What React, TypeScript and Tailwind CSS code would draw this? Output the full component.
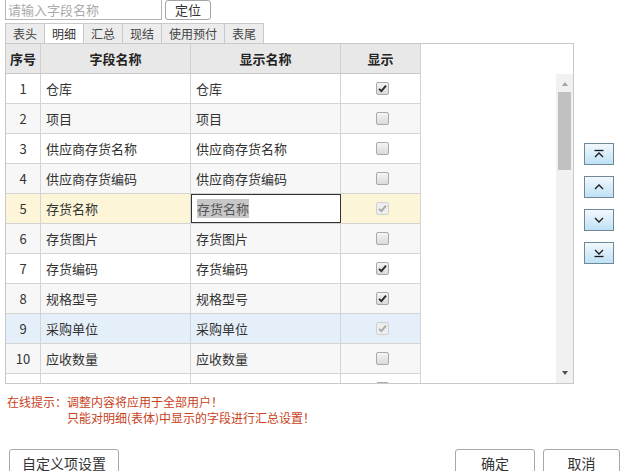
import React from "react";

type Row = { no: number; field: string; show: string; checked: boolean; disabled?: boolean; tone?: "yellow" | "blue" };

const rows: Row[] = [
  { no: 1, field: "仓库", show: "仓库", checked: true },
  { no: 2, field: "项目", show: "项目", checked: false },
  { no: 3, field: "供应商存货名称", show: "供应商存货名称", checked: false },
  { no: 4, field: "供应商存货编码", show: "供应商存货编码", checked: false },
  { no: 5, field: "存货名称", show: "存货名称", checked: true, disabled: true, tone: "yellow" },
  { no: 6, field: "存货图片", show: "存货图片", checked: false },
  { no: 7, field: "存货编码", show: "存货编码", checked: true },
  { no: 8, field: "规格型号", show: "规格型号", checked: true },
  { no: 9, field: "采购单位", show: "采购单位", checked: true, disabled: true, tone: "blue" },
  { no: 10, field: "应收数量", show: "应收数量", checked: false },
  { no: 11, field: "数量", show: "数量", checked: false },
];

const tabs = ["表头", "明细", "汇总", "现结", "使用预付", "表尾"];

function Check({ checked, disabled }: { checked: boolean; disabled?: boolean }) {
  return (
    <span
      className={`flex h-[13px] w-[13px] items-center justify-center rounded-[2px] border ${
        disabled ? "border-[#d0d0d0] bg-[#eeeeee]" : "border-[#a9a9a9] bg-gradient-to-b from-[#f4f4f4] to-[#dadada]"
      }`}
    >
      {checked && (
        <svg width="9" height="9" viewBox="0 0 9 9">
          <path
            d="M1 4.8 L3.4 7.2 L8 1.6"
            fill="none"
            stroke={disabled ? "#a8a8a8" : "#2b2b2b"}
            strokeWidth="1.9"
          />
        </svg>
      )}
    </span>
  );
}

function MoveButton({ kind }: { kind: "top" | "up" | "down" | "bottom" }) {
  return (
    <button className="flex h-[22px] w-[30px] items-center justify-center border border-[#6f8796] bg-gradient-to-b from-[#f2f8fc] to-[#bfe1f6]">
      <svg width="12" height="10" viewBox="0 0 12 10">
        {kind === "top" && (
          <>
            <path d="M1.5 1.5 H10.5" stroke="#1a1a1a" strokeWidth="1.3" />
            <path d="M2 8 L6 4 L10 8" fill="none" stroke="#1a1a1a" strokeWidth="1.3" />
          </>
        )}
        {kind === "up" && <path d="M2 7 L6 3 L10 7" fill="none" stroke="#1a1a1a" strokeWidth="1.3" />}
        {kind === "down" && <path d="M2 3 L6 7 L10 3" fill="none" stroke="#1a1a1a" strokeWidth="1.3" />}
        {kind === "bottom" && (
          <>
            <path d="M2 2 L6 6 L10 2" fill="none" stroke="#1a1a1a" strokeWidth="1.3" />
            <path d="M1.5 8.5 H10.5" stroke="#1a1a1a" strokeWidth="1.3" />
          </>
        )}
      </svg>
    </button>
  );
}

export default function App() {
  return (
    <div
      className="relative h-[471px] w-[625px] overflow-hidden bg-white text-[13px] text-[#333]"
      style={{ fontFamily: '"Noto Sans CJK SC", "Liberation Sans", sans-serif' }}
    >
      {/* search bar */}
      <div className="-mt-[1px] flex items-start pl-[5px]">
        <input
          placeholder="请输入字段名称"
          className="h-[21px] w-[157px] border border-[#b5b5b5] px-[2px] text-[13px] leading-[19px] outline-none placeholder:text-[#aaa]"
        />
        <button className="ml-[3px] mt-[1px] h-[20px] w-[46px] rounded-[3px] border border-[#a5a5a5] bg-white text-[13px] leading-[18px]">
          定位
        </button>
      </div>

      {/* tabs */}
      <div className="mt-[3px] flex pl-[5px]">
        {tabs.map((t, i) => (
          <div
            key={t}
            className={`-mr-px h-[20px] border border-b-0 border-[#c9c9c9] px-[7px] text-[12px] leading-[19px] ${
              i === 1 ? "bg-white text-[#333]" : "bg-[#ececec] text-[#444]"
            }`}
          >
            {t}
          </div>
        ))}
      </div>

      <div className="flex items-start">
        {/* table */}
        <div className="ml-[5px] h-[341px] w-[569px] overflow-hidden border border-[#c9c9c9]">
          <div className="flex h-[30px] w-[415px] border-b border-[#c9c9c9] bg-[#e8e8e8] font-bold text-[#222]">
            <div className="flex w-[35px] items-center justify-center border-r border-[#cfcfcf]">序号</div>
            <div className="flex w-[150px] items-center justify-center border-r border-[#cfcfcf]">字段名称</div>
            <div className="flex w-[150px] items-center justify-center border-r border-[#cfcfcf]">显示名称</div>
            <div className="flex w-[80px] items-center justify-center border-r border-[#cfcfcf]">显示</div>
          </div>
          <div className="flex h-[309px]">
            <div className="w-[550px] overflow-hidden">
              {rows.map((r) => (
                <div
                  key={r.no}
                  className={`flex h-[30px] w-[415px] border-b border-[#d4d4d4] ${
                    r.tone === "yellow"
                      ? "bg-[#fdf5d8]"
                      : r.tone === "blue"
                        ? "bg-[#e5effa]"
                        : r.no % 2 === 0
                          ? "bg-[#f7f7f7]"
                          : "bg-white"
                  }`}
                >
                  <div className="flex w-[35px] items-center justify-center border-r border-[#d4d4d4]">{r.no}</div>
                  <div className="flex w-[150px] items-center border-r border-[#d4d4d4] pl-[5px]">{r.field}</div>
                  {r.tone === "yellow" ? (
                    <div className="flex w-[150px] items-center border border-[#333] bg-white pl-[5px]">
                      <span className="bg-[#c8c8c8] text-[#555]">{r.show}</span>
                    </div>
                  ) : (
                    <div className="flex w-[150px] items-center border-r border-[#d4d4d4] pl-[5px]">{r.show}</div>
                  )}
                  <div className="flex w-[80px] items-center justify-center border-r border-[#d4d4d4] pl-[4px]">
                    <Check checked={r.checked} disabled={r.disabled} />
                  </div>
                </div>
              ))}
            </div>
            {/* scrollbar */}
            <div className="flex w-[17px] flex-col items-center bg-[#f1f1f1]">
              <svg width="8" height="8" viewBox="0 0 8 8" className="mt-[6px]">
                <path d="M1 6 L4 2 L7 6 Z" fill="#a3a3a3" />
              </svg>
              <div className="mt-[4px] h-[78px] w-[13px] bg-[#c1c1c1]" />
              <div className="flex-1" />
              <svg width="8" height="8" viewBox="0 0 8 8" className="mb-[6px]">
                <path d="M1 2 L4 6 L7 2 Z" fill="#505050" />
              </svg>
            </div>
          </div>
        </div>

        {/* move buttons */}
        <div className="ml-[10px] mt-[100px] flex flex-col gap-[11px]">
          <MoveButton kind="top" />
          <MoveButton kind="up" />
          <MoveButton kind="down" />
          <MoveButton kind="bottom" />
        </div>
      </div>

      {/* hint */}
      <div className="mt-[10px] pl-[7px] text-[12px] leading-[16px] text-[#c8421c]">
        <div>在线提示：调整内容将应用于全部用户！</div>
        <div className="pl-[60px]">只能对明细(表体)中显示的字段进行汇总设置！</div>
      </div>

      {/* footer buttons */}
      <div className="mt-[23px] flex">
        <button className="ml-[9px] h-[28px] w-[110px] rounded-[3px] border border-[#a8a8a8] bg-white text-[14px] leading-[26px] text-[#333]">
          自定义项设置
        </button>
        <div className="flex-1" />
        <button className="h-[28px] w-[80px] rounded-[3px] border border-[#a8a8a8] bg-white text-[14px] leading-[26px] text-[#333]">
          确定
        </button>
        <button className="ml-[8px] mr-[5px] h-[28px] w-[77px] rounded-[3px] border border-[#a8a8a8] bg-white text-[14px] leading-[26px] text-[#333]">
          取消
        </button>
      </div>
    </div>
  );
}
